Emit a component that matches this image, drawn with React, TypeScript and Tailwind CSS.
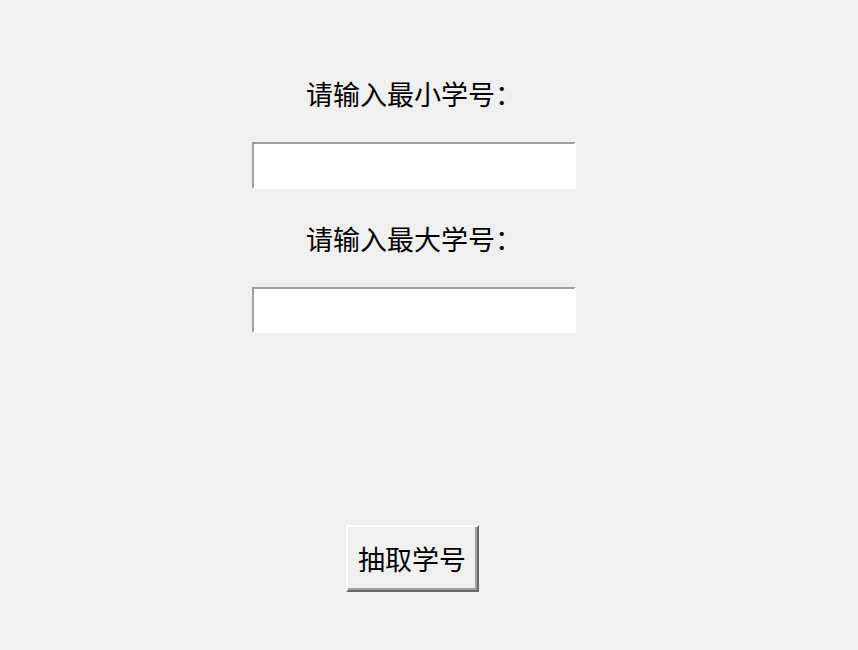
export default function App() {
  const font = { fontFamily: '"Noto Sans CJK SC", "Liberation Sans", sans-serif' }

  return (
    <div
      className="flex h-[650px] w-full flex-col items-center bg-[#f0f0f0] pr-[30px] pt-[76px] text-[27px] text-black"
      style={font}
    >
      <label className="block h-[36px] leading-[36px]">请输入最小学号：</label>
      <input
        type="text"
        className="mt-[30px] h-[47px] w-[324px] border-t-2 border-l-2 border-r-2 border-b-2 border-t-[#a0a0a0] border-l-[#a0a0a0] border-r-white border-b-white bg-white px-1 text-[22px] outline-none"
      />

      <label className="mt-[32px] block h-[36px] leading-[36px]">请输入最大学号：</label>
      <input
        type="text"
        className="mt-[30px] h-[46px] w-[324px] border-t-2 border-l-2 border-r-2 border-b-2 border-t-[#a0a0a0] border-l-[#a0a0a0] border-r-white border-b-white bg-white px-1 text-[22px] outline-none"
      />

      <button
        type="button"
        className="mr-[4px] mt-[192px] h-[67px] w-[133px] border-t-2 border-l-2 border-r-2 border-b-2 border-t-white border-l-white border-r-[#696969] border-b-[#696969] bg-[#f0f0f0] text-[27px] leading-none text-black shadow-[inset_-2px_-2px_0_#a0a0a0]"
      >
        抽取学号
      </button>
    </div>
  )
}
